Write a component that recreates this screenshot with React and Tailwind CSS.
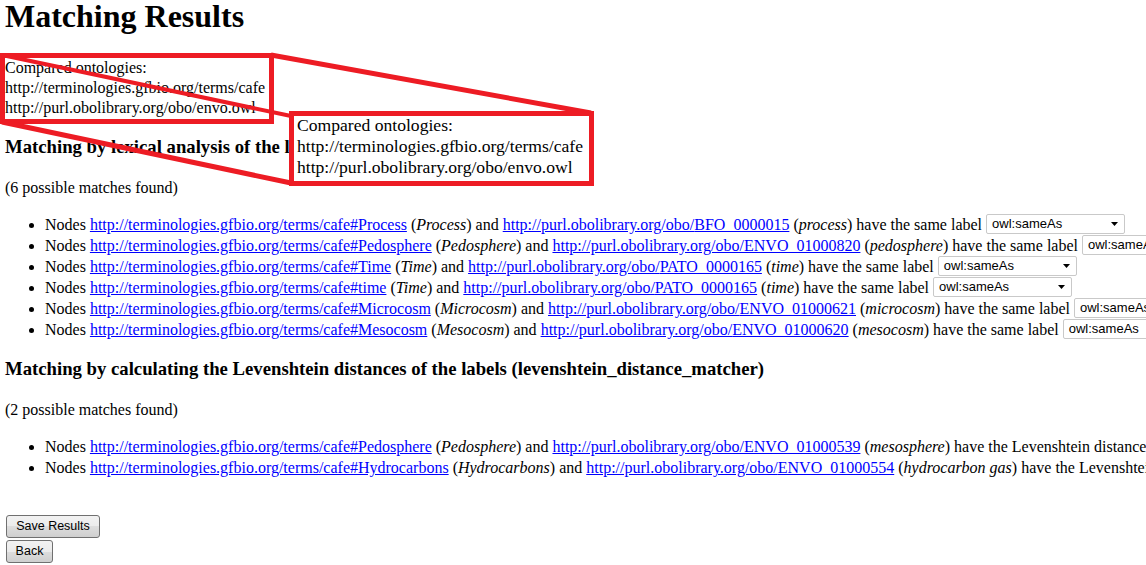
import React from 'react';

const lexicalRows = [
  ['Process', 'Process', 'BFO_0000015', 'process'],
  ['Pedosphere', 'Pedosphere', 'ENVO_01000820', 'pedosphere'],
  ['Time', 'Time', 'PATO_0000165', 'time'],
  ['time', 'Time', 'PATO_0000165', 'time'],
  ['Microcosm', 'Microcosm', 'ENVO_01000621', 'microcosm'],
  ['Mesocosm', 'Mesocosm', 'ENVO_01000620', 'mesocosm'],
];

const levenshteinRows = [
  ['Pedosphere', 'Pedosphere', 'ENVO_01000539', 'mesosphere', 2],
  ['Hydrocarbons', 'Hydrocarbons', 'ENVO_01000554', 'hydrocarbon gas', 4],
];

// looks like a classic windows dropdown
function FakeSelect() {
  return (
    <span className="inline-flex h-[20px] w-[139px] items-center justify-between rounded-[2px] border border-[#c9c9c9] bg-white pl-[5px] pr-[6px] align-top font-['Liberation_Sans',sans-serif] text-[13px] leading-[18px] text-black">
      <span>owl:sameAs</span>
      <svg width="7" height="4" viewBox="0 0 7 4">
        <path d="M0 0h7L3.5 4z" fill="#000" />
      </svg>
    </span>
  );
}

function Link({ children }) {
  return (
    <a href="#" className="text-[#0000ff] underline">
      {children}
    </a>
  );
}

function Button({ children, width }) {
  return (
    <button
      className={`flex h-[23px] ${width} items-center justify-center rounded-[3px] border border-[#707070] bg-[linear-gradient(#f2f2f2,#ebebeb_50%,#dddddd_50%,#cfcfcf)] font-['Liberation_Sans',sans-serif] text-[12.5px] text-black`}
    >
      {children}
    </button>
  );
}

export default function App() {
  return (
    <div className="relative h-[565px] w-[1146px] overflow-hidden whitespace-nowrap bg-white pl-[5px] font-['Liberation_Serif',serif] text-[16px] text-black">
      <h1 className="text-[32px] font-bold leading-[32px]">Matching Results</h1>

      <div className="mt-[26px] leading-[20px]">
        <div>Compared ontologies:</div>
        <div>http://terminologies.gfbio.org/terms/cafe</div>
        <div>http://purl.obolibrary.org/obo/envo.owl</div>
      </div>

      <h3 className="mt-[18px] text-[18.72px] font-bold leading-[22px]">
        Matching by lexical analysis of the labels (lexical_matcher)
      </h3>
      <p className="mt-[20px] leading-[20px]">(6 possible matches found)</p>
      <ul className="mt-[16px] list-disc pl-[40px] leading-[21px]">
        {lexicalRows.map(([a, b, c, d]) => (
          <li key={a}>
            Nodes <Link>http://terminologies.gfbio.org/terms/cafe#{a}</Link> (<i>{b}</i>) and{' '}
            <Link>http://purl.obolibrary.org/obo/{c}</Link> (<i>{d}</i>) have the same label <FakeSelect />
          </li>
        ))}
      </ul>

      <h3 className="mt-[18px] text-[18.72px] font-bold leading-[22px]">
        Matching by calculating the Levenshtein distances of the labels (levenshtein_distance_matcher)
      </h3>
      <p className="mt-[20px] leading-[20px]">(2 possible matches found)</p>
      <ul className="mt-[16px] list-disc pl-[40px] leading-[21px]">
        {levenshteinRows.map(([a, b, c, d, n]) => (
          <li key={a}>
            Nodes <Link>http://terminologies.gfbio.org/terms/cafe#{a}</Link> (<i>{b}</i>) and{' '}
            <Link>http://purl.obolibrary.org/obo/{c}</Link> (<i>{d}</i>) have the Levenshtein distance {n}{' '}
            <FakeSelect />
          </li>
        ))}
      </ul>

      <div className="mt-[37px] flex flex-col gap-[2px] pl-px">
        <Button width="w-[94px]">Save Results</Button>
        <Button width="w-[47px]">Back</Button>
      </div>

      {/* zoom callout drawn over the page */}
      <svg className="pointer-events-none absolute left-0 top-0" width="1146" height="565">
        <g stroke="#ed1c24" fill="none">
          <rect x="2.5" y="55.5" width="269" height="66" strokeWidth="5" />
          <line x1="271" y1="55" x2="591" y2="113" strokeWidth="5" />
          <line x1="2" y1="55" x2="291" y2="116" strokeWidth="4" />
          <line x1="2" y1="122" x2="291" y2="183" strokeWidth="5" />
        </g>
      </svg>
      <div className="absolute left-[289px] top-[111px] h-[75px] w-[305px] border-[5px] border-[#ed1c24] bg-white pl-[3px] text-[17.6px] leading-[21px]">
        <div className="-mt-[1px]">
          <div>Compared ontologies:</div>
          <div>http://terminologies.gfbio.org/terms/cafe</div>
          <div>http://purl.obolibrary.org/obo/envo.owl</div>
        </div>
      </div>
    </div>
  );
}
